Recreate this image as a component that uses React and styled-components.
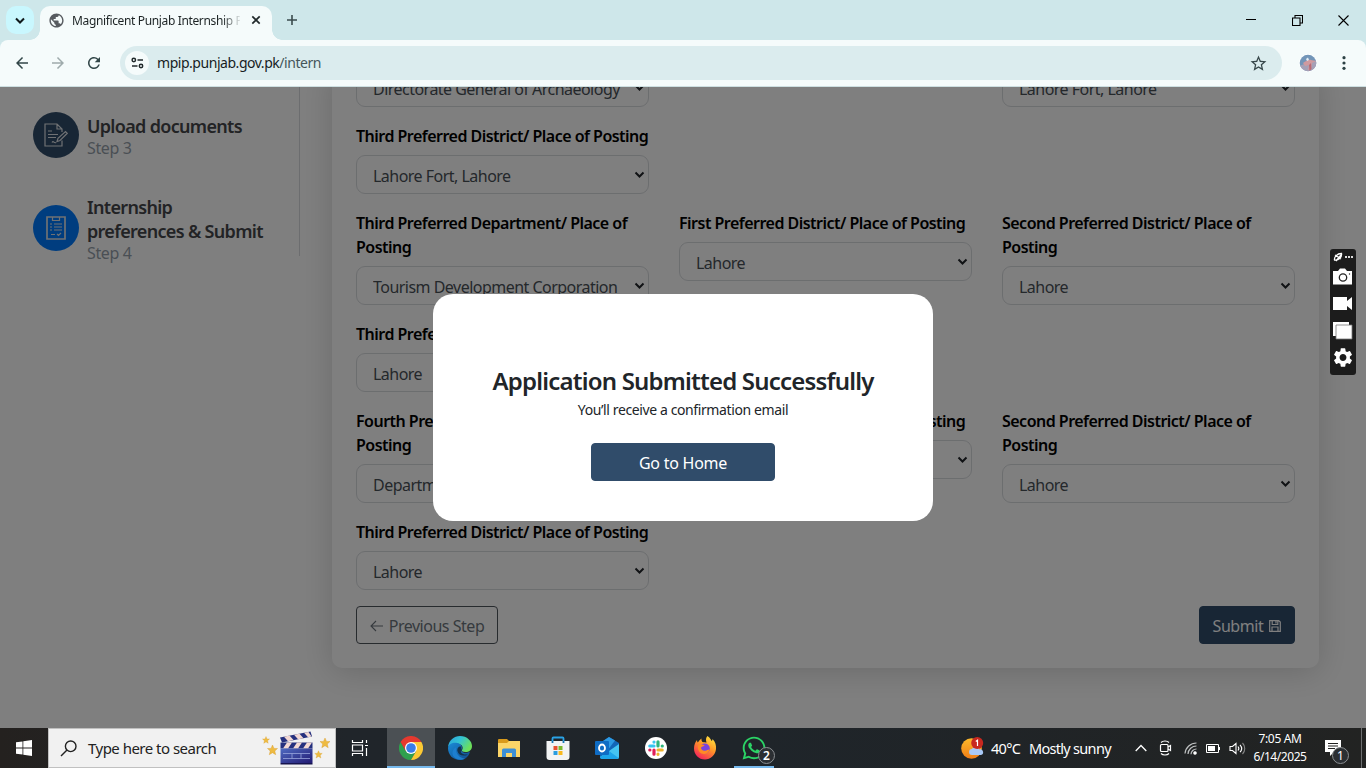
import React from "react";
import styled, { createGlobalStyle } from "styled-components";
import { MdPublic, MdStarBorder, MdArrowBack, MdArrowForward, MdRefresh, MdSettings } from "react-icons/md";
import { FaWhatsapp } from "react-icons/fa";

const Global = createGlobalStyle`
  * { box-sizing: border-box; }
  body { margin: 0; overflow: hidden; font-family: "Noto Sans", "Open Sans", sans-serif; }
  svg { display: block; flex: none; }
`;

const Screen = styled.div`
  width: 1366px;
  height: 768px;
  display: flex;
  flex-direction: column;
  overflow: hidden;
`;

const Text = styled.span`
  white-space: nowrap;
  letter-spacing: ${(p) => p.$ls || 0}px;
`;

/* ---------- browser frame ---------- */

const TabStrip = styled.div`
  height: 40px;
  flex: none;
  display: flex;
  align-items: flex-start;
  padding: 6px 0 0 6px;
  background: #cee7ea;
`;

const TabSearch = styled.div`
  width: 28px;
  height: 28px;
  border-radius: 10px;
  background: #c9f7fe;
  display: grid;
  place-items: center;
`;

const Tab = styled.div`
  position: relative;
  width: 232px;
  height: 34px;
  margin-left: 6px;
  padding: 0 11px 6px 8px;
  display: flex;
  align-items: center;
  background: #f5fbfb;
  border-radius: 10px 10px 0 0;
  &::before, &::after {
    content: "";
    position: absolute;
    bottom: 0;
    width: 10px;
    height: 10px;
  }
  &::before { left: -10px; background: radial-gradient(circle at 0 0, transparent 9.5px, #f5fbfb 10px); }
  &::after { right: -10px; background: radial-gradient(circle at 100% 0, transparent 9.5px, #f5fbfb 10px); }
`;

const TabTitle = styled.div`
  width: 168px;
  margin-left: 7px;
  padding-top: 1px;
  overflow: hidden;
  font-size: 12px;
  line-height: 18px;
  color: #1c2324;
  mask-image: linear-gradient(90deg, #000 150px, transparent 170px);
`;

const TabClose = styled.div`
  margin-left: auto;
`;

const NewTab = styled.div`
  margin: 8px 0 0 14px;
`;

const WindowButtons = styled.div`
  margin-left: auto;
  display: flex;
  height: 28px;
  > div { width: 46px; display: grid; place-items: center; }
`;

const ToolbarBack = styled.div`
  height: 47px;
  flex: none;
  background: #cee7ea;
`;

const Toolbar = styled.div`
  height: 47px;
  display: flex;
  align-items: center;
  background: #f5fbfb;
  border-bottom: 1px solid #cddfe1;
  border-radius: 8px 8px 0 0;
`;

const ToolIcon = styled.div`
  width: ${(p) => p.$w || 36}px;
  display: grid;
  place-items: center;
  color: ${(p) => p.$c || "#324648"};
`;

const Omnibox = styled.div`
  width: 1162px;
  height: 34px;
  margin-left: 4px;
  padding: 0 14px 0 5px;
  display: flex;
  align-items: center;
  border-radius: 17px;
  background: #dbecee;
`;

const SiteInfo = styled.div`
  width: 24px;
  height: 24px;
  border-radius: 50%;
  background: #f5fbfb;
  display: grid;
  place-items: center;
`;

const Url = styled.div`
  flex: 1;
  margin-left: 8px;
  font-size: 14px;
  line-height: 20px;
  color: #171d1e;
  i { font-style: normal; color: #44565a; }
`;

/* ---------- web page ---------- */

const Page = styled.main`
  position: relative;
  flex: 1;
  min-height: 0;
  overflow: hidden;
  display: flex;
  align-items: flex-start;
  background: #fff;
`;

const Steps = styled.aside`
  width: 300px;
  height: 169px;
  padding: 25px 0 0 33px;
  border-right: 1px solid #d9dbde;
`;

const Step = styled.div`
  display: flex;
  align-items: center;
  margin-bottom: ${(p) => p.$gap || 0}px;
`;

const StepBadge = styled.div`
  width: 46px;
  height: 46px;
  margin-right: 8px;
  border-radius: 50%;
  display: grid;
  place-items: center;
  background: ${(p) => p.$bg};
`;

const StepText = styled.div`
  padding-top: 2px;
`;

const StepTitle = styled.div`
  font-size: 18px;
  font-weight: 600;
  line-height: 24px;
  color: #45464a;
`;

const StepNote = styled.div`
  font-size: 16px;
  line-height: 20px;
  color: #949ea9;
`;

const Card = styled.section`
  width: 987px;
  margin: -19px 0 0 32px;
  padding: 0 24px 24px;
  border-radius: 10px;
  background: #fff;
  box-shadow: 0 4px 32px rgba(0, 0, 0, 0.17);
`;

const FieldGrid = styled.div`
  display: grid;
  grid-template-columns: repeat(3, 293px);
  column-gap: 30px;
  row-gap: 16px;
  align-items: start;
  margin-bottom: 16px;
`;

const Field = styled.div`
  grid-column: ${(p) => p.$col || "auto"};
`;

const Label = styled.div`
  padding-top: 1px;
  margin-bottom: 7px;
  font-size: 16px;
  font-weight: 600;
  line-height: 24px;
  color: #000;
`;

const Select = styled.div`
  height: 39px;
  padding: 0 3px 0 16px;
  display: flex;
  align-items: center;
  justify-content: space-between;
  border: 1px solid #d9dcdf;
  border-radius: 9px;
  font-size: 16px;
  line-height: 24px;
  color: #495057;
`;

const Value = styled.div`
  width: 249px;
  padding-top: 3px;
  overflow: hidden;
`;

const Actions = styled.div`
  display: flex;
  justify-content: space-between;
`;

const Button = styled.div`
  height: 38px;
  width: ${(p) => p.$w}px;
  padding-top: 1px;
  display: flex;
  align-items: center;
  justify-content: center;
  gap: 6px;
  border-radius: 4px;
  font-size: 16px;
  line-height: 24px;
  border: 1px solid ${(p) => (p.$outline ? "#4f565d" : "#304c6a")};
  background: ${(p) => (p.$outline ? "transparent" : "#304c6a")};
  color: ${(p) => (p.$outline ? "#6c757d" : "#fff")};
`;

const Backdrop = styled.div`
  position: absolute;
  inset: 0;
  display: grid;
  place-items: center;
  background: rgba(0, 0, 0, 0.5);
`;

const Modal = styled.div`
  width: 500px;
  height: 227px;
  padding-top: 72px;
  display: flex;
  flex-direction: column;
  align-items: center;
  border-radius: 20px;
  background: #fff;
  color: #212529;
`;

const ModalTitle = styled.div`
  font-size: 24px;
  font-weight: 600;
  line-height: 30px;
`;

const ModalNote = styled.div`
  margin: 3px 0 23px;
  font-size: 14px;
  line-height: 21px;
`;

const Recorder = styled.div`
  position: absolute;
  left: 1330px;
  top: 162px;
  width: 26px;
  height: 126px;
  border-radius: 3px;
  background: #1c1c1c;
`;

/* ---------- taskbar ---------- */

const Taskbar = styled.footer`
  height: 40px;
  flex: none;
  display: flex;
  align-items: stretch;
  background: linear-gradient(90deg, #24211f 0, #20252a 350px, #1f252a 760px, #202427 1000px, #222322 1366px);
  color: #fff;
`;

const Cell = styled.div`
  position: relative;
  width: ${(p) => p.$w || 48}px;
  margin-right: ${(p) => p.$mr || 0}px;
  display: grid;
  place-items: center;
  background: ${(p) => (p.$active ? "#4b5054" : "transparent")};
  box-shadow: ${(p) => (p.$active ? "inset 0 -2px #76b9ed" : "none")};
`;

const RunMark = styled.div`
  position: absolute;
  left: 4px;
  right: 4px;
  bottom: 0;
  height: 2px;
  background: #76b9ed;
`;

const Badge = styled.div`
  position: absolute;
  left: ${(p) => p.$x}px;
  top: ${(p) => p.$y}px;
  width: 17px;
  height: 17px;
  border-radius: 50%;
  border: 1px solid #8b8f92;
  background: #2b2f33;
  font-size: 12px;
  font-weight: ${(p) => p.$weight || 600};
  line-height: 15px;
  text-align: center;
`;

const SearchBox = styled.div`
  width: 288px;
  display: flex;
  align-items: center;
  padding: 0 5px 0 11px;
  border: 1px solid #c0c0c0;
  background: #f1f1f1;
  color: #222;
  font-size: 15px;
`;

const SearchHint = styled.div`
  flex: 1;
  margin-left: 11px;
`;

const Tray = styled.div`
  margin-left: auto;
  display: flex;
  align-items: stretch;
`;

const Weather = styled.div`
  width: 169px;
  display: flex;
  align-items: center;
  font-size: 14.5px;
`;

const WeatherIcon = styled.div`
  margin-right: 7px;
`;

const WeatherTemp = styled.div`
  width: 38px;
`;

const Clock = styled.div`
  width: 62px;
  padding-top: 2px;
  text-align: center;
  font-size: 12px;
  line-height: 18px;
`;

const ShowDesktop = styled.div`
  width: 5px;
  border-left: 1px solid #6d6f70;
`;

/* ---------- drawings ---------- */

const Stroke = ({ w, h = w, d, sw = 1.5, c = "currentColor", children }) => (
  <svg width={w} height={h} viewBox={`0 0 ${w} ${h}`} fill="none" stroke={c} strokeWidth={sw}>
    {d && <path d={d} />}
    {children}
  </svg>
);

const Caret = () => <Stroke w={11} h={8} sw={2} c="#202429" d="M1.5 1.5 5.5 5.5 9.5 1.5" />;

const Chrome = () => (
  <svg width="24" height="24" viewBox="0 0 24 24">
    <path d="M12 12 17.2 15 12 24A12 12 0 0 1 1.6 6L6.8 15z" fill="#2fa04e" />
    <path d="M12 6H22.4A12 12 0 0 0 1.6 6L6.8 15z" fill="#e5392f" />
    <path d="M12 6H22.4A12 12 0 0 1 12 24L17.2 15z" fill="#fcc934" />
    <circle cx="12" cy="12" r="6" fill="#fff" />
    <circle cx="12" cy="12" r="4.8" fill="#3a7de9" />
  </svg>
);

const Edge = () => (
  <svg width="24" height="24" viewBox="0 0 24 24">
    <defs>
      <linearGradient id="edgeTop" x1="0" y1="0" x2="1" y2=".5">
        <stop offset="0" stopColor="#2c9fdc" />
        <stop offset=".5" stopColor="#33c3d4" />
        <stop offset="1" stopColor="#6ce05a" />
      </linearGradient>
      <linearGradient id="edgeLow" x1="0" y1="0" x2="1" y2="1">
        <stop offset="0" stopColor="#1a8bd8" />
        <stop offset="1" stopColor="#114a8b" />
      </linearGradient>
    </defs>
    <path d="M0 11C1 4 6 0 12 0c7 0 12 5 12 10 0 4-3 6-6.500 6-3 0-4-1-3.500-2 1.500-2 .5-6-4-6C5 8 1 10 0 11z" fill="url(#edgeTop)" />
    <path d="M0 12C.5 8 4 6.500 8 6.700c4 .3 6.500 2.800 6 5.800-.4 1-1 1.200-.6 2.200 1 2.300 5.600 2.800 8.600.8C20.500 21 17 24 12 24 5 24 0 19 0 12z" fill="url(#edgeLow)" />
    <path d="M8.500 11c-2 5 2 11 8.500 11.500C14 24.300 9 24.500 5.500 20.500 3 17 5 12.500 8.500 11z" fill="#1d7fcf" />
    <path d="M13.300 10.500c-2.500-.5-4.500 1.700-3.800 4.700.8 3.800 5.500 5.800 10.500 3.200-2 .6-9-.2-6.700-4.700z" fill="#13324c" />
  </svg>
);

const Folder = () => (
  <svg width="22" height="18" viewBox="0 0 22 18">
    <path d="M0 1a1 1 0 0 1 1-1h8l2 2h10a1 1 0 0 1 1 1v14H0z" fill="#d99a1b" />
    <path d="M0 4h9l2-2h11v16H0z" fill="#fbd568" />
    <path d="M4 18v-7a1.500 1.500 0 0 1 1.500-1.500h11A1.500 1.500 0 0 1 18 11v7h-4v-4H8v4z" fill="#3c8fd6" />
  </svg>
);

const Store = () => (
  <svg width="24" height="24" viewBox="0 0 24 24">
    <path d="M6.500 7V2.500a1 1 0 0 1 1-1h9a1 1 0 0 1 1 1V7" fill="none" stroke="#2aa3e6" strokeWidth="1.800" />
    <path d="M.5 5h23v16a3 3 0 0 1-3 3h-17a3 3 0 0 1-3-3z" fill="#f2f3f4" />
    <path d="M6.500 7V5M17.500 7V5" stroke="#1878b8" strokeWidth="1.800" />
    <path d="M7.500 10h4v4h-4z" fill="#e8502f" />
    <path d="M12.500 10h4v4h-4z" fill="#7dba2c" />
    <path d="M7.500 15h4v4h-4z" fill="#2a9de0" />
    <path d="M12.500 15h4v4h-4z" fill="#f9b91e" />
  </svg>
);

const Outlook = () => (
  <svg width="24" height="22" viewBox="0 0 24 22">
    <path d="M5 6 14 0l10 6v14a2 2 0 0 1-2 2H7a2 2 0 0 1-2-2z" fill="#1266b8" />
    <path d="M5 6 14 0l6 3.500L12 14z" fill="#2c9ae4" />
    <path d="M24 7v13a2 2 0 0 1-2 2H7l-2-2 9-6z" fill="#45c5f2" />
    <path d="M14 14l9.500 7a2 2 0 0 1-1.500 1H7a2 2 0 0 1-2-2z" fill="#1ea6ea" />
    <rect y="4" width="14" height="14" rx="1" fill="#0f6cc4" />
    <ellipse cx="7" cy="11" rx="3" ry="3.500" fill="none" stroke="#fff" strokeWidth="1.800" />
  </svg>
);

const Slack = () => (
  <svg width="22" height="22" viewBox="0 0 22 22">
    <circle cx="11" cy="11" r="11" fill="#fff" />
    <g strokeWidth="3.200" strokeLinecap="round">
      <path d="M9 5v.1M4.800 9H9" stroke="#36c5f0" />
      <path d="M13 4.800V9M17.200 9h.1" stroke="#2eb67d" />
      <path d="M4.800 13h.1M9 13v4.200" stroke="#e01e5a" />
      <path d="M13 13h4.200M13 17.200v.1" stroke="#ecb22e" />
    </g>
  </svg>
);

const Firefox = () => (
  <svg width="24" height="24" viewBox="0 0 24 24">
    <defs>
      <linearGradient id="fox" x1=".8" y1="0" x2=".2" y2="1">
        <stop offset="0" stopColor="#ffe63f" />
        <stop offset=".45" stopColor="#ff9428" />
        <stop offset="1" stopColor="#f3195f" />
      </linearGradient>
    </defs>
    <path d="M14.500 0c3 2 3.500 4 4 5 1-.5 1-1.500 1-2 3 3 3.800 6 3.500 10-.6 6-5.500 10.500-11 10.500C5.500 23.500 1 18.500 1 12.500c0-3.500 1.200-6.500 3-8.500 0 1 .3 2 .7 2.600C5.500 5.500 7 3.500 8.500 2.500 8.300 4 8.600 5 9.500 6c2 .3 3 .4 4 .4C12.500 4 13 1.500 14.500 0z" fill="url(#fox)" />
    <circle cx="11.800" cy="12.500" r="5" fill="#7a42dd" />
    <path d="M5 9.500c2-1.500 5-1.200 6.800 0-1.200.8-3.300 1-3.800 2.200 0 1.500 1.500 3.300 4 3 2-.3 3-1.500 4.500-1.200-.8 3.500-4 5-6.700 4.300C6 17 4.500 13.500 5 9.500z" fill="#ff8b25" />
  </svg>
);

const Clapper = () => (
  <svg width="68" height="34" viewBox="0 0 68 34">
    <defs>
      <linearGradient id="clap" x1="0" y1="0" x2="1" y2="1">
        <stop offset="0" stopColor="#4f6bc2" />
        <stop offset="1" stopColor="#221a72" />
      </linearGradient>
      <path id="star" d="M0-5 1.500-1.600 5-1.500 2.300 1 3.200 4.700 0 2.700-3.200 4.700-2.300 1-5-1.500-1.500-1.600z" />
    </defs>
    <path d="M18 6.500 48.500 .5l1.500 5L20 11.500z" fill="#26317f" />
    <path d="M22 5.800l5.500-1.200 4 4.500-5.500 1.200zM32 3.800l5.500-1.100 4 4.500-5.500 1.100zM42 1.800l4.500-.9 3 4.500-3.500.8z" fill="#f3d9d3" />
    <path d="M18.500 11.500h32v6h-32z" fill="#26317f" />
    <path d="M25 11.500h5l-4 6h-5zM35 11.500h5l-4 6h-5zM45 11.500h5l-4 6h-5z" fill="#f3d9d3" />
    <path d="M18.500 17.500h32V32h-32z" fill="url(#clap)" />
    <path d="M21 22.500h27M21 27.500h27M30 22.500v5M39 22.500v5" stroke="#98a4dc" strokeWidth=".8" />
    <path d="M18.500 32h32v1.500h-32z" fill="#16144e" />
    <g fill="#eebb42" stroke="#d69b2a" strokeWidth=".4">
      <use href="#star" transform="translate(4 9) scale(.7)" />
      <use href="#star" transform="translate(10.500 19)" />
      <use href="#star" transform="translate(63 12)" />
      <use href="#star" transform="translate(56.500 23.500) scale(.75)" />
    </g>
  </svg>
);

const DocPen = () => (
  <Stroke w={24} h={24} c="#dfe3e8" sw={1.200}>
    <path d="M18 17.500V23H1V1h12l5 5v3M13 1v5h5M4 8h4M4 11.500h10M4 14.500h8" />
    <path d="M13 18.500l1-3.200 7.500-6.800 1.800 1.800-7.300 7.200zM8 19.500c1.500-2.500 2 1.300 4 0" />
  </Stroke>
);

const Clipboard = () => (
  <Stroke w={20} h={24} c="#dfe3e8" sw={1.200}>
    <path d="M1 1h18v22H1z" strokeWidth="1.700" />
    <path d="M6.500 1v3.500h7V1M8 8h8M8 11h8M8 14h8M4 8h2M4 11h2M4 14h2M5 18.500h4M11 18l1.500 1.500L15 17" />
  </Stroke>
);

const FloppyIcon = () => (
  <Stroke w={12} h={12} sw={1.200}>
    <path d="M.7.7h9L11.300 2v9.300H.7zM3.200 1v3.500h5.600V1M3 11V7h6v4M7 1v2.500" />
  </Stroke>
);

const RecorderIcons = () => (
  <svg width="26" height="126" viewBox="0 0 26 126">
    <path d="M4.500 11C4 8 7 4.500 11.500 4.500 12 8 9 11.500 4.500 11zM6 12l5-6M5 6l6 4" fill="none" stroke="#fff" strokeWidth="1.300" />
    <path d="M15 7h2v2h-2zM18 7h2v2h-2zM21 7h2v2h-2z" fill="#ddd" />
    <path d="M3 22h5l2-2.500h5l2 2.500h5v13.500H3z" fill="#fff" />
    <circle cx="13" cy="28.500" r="3.700" fill="none" stroke="#222" strokeWidth="1.300" />
    <circle cx="19.500" cy="25" r=".7" fill="#222" />
    <path d="M3 48h14v4l5-4v13l-5-4v4H3z" fill="#fff" />
    <path d="M3 73h16v14H3z" fill="#fff" />
    <path d="M6 76h16v14H6z" fill="#fff" stroke="#777" strokeWidth=".8" />
    <g transform="translate(1.500 97)">
      <MdSettings size={23} color="#fff" />
    </g>
  </svg>
);

const WindowsLogo = () => (
  <svg width="16" height="16" viewBox="0 0 16 16" fill="#fff">
    <path d="M0 2.300 6.500 1.400V7.600H0zM7.300 1.300 16 0v7.600H7.300zM0 8.400h6.500v6.200L0 13.700zM7.300 8.400H16V16l-8.700-1.300z" />
  </svg>
);

const WeatherGlyph = () => (
  <svg width="23" height="22" viewBox="0 0 23 22">
    <defs>
      <linearGradient id="sun" x1="0" y1="0" x2="0" y2="1">
        <stop offset="0" stopColor="#fdb92b" />
        <stop offset="1" stopColor="#ef7d16" />
      </linearGradient>
    </defs>
    <circle cx="10.500" cy="11.500" r="10.300" fill="url(#sun)" />
    <path d="M11 18a3 3 0 0 1 0-6 4 4 0 0 1 7.500.5A2.800 2.800 0 0 1 20 18z" fill="#a9c8f5" />
    <circle cx="16.200" cy="6" r="6" fill="#c8281f" />
    <path d="M14.800 4.500 16.500 3.200V9" fill="none" stroke="#fff" strokeWidth="1.200" />
  </svg>
);

const Avatar = () => (
  <svg width="18" height="18" viewBox="0 0 18 18">
    <defs>
      <clipPath id="face"><circle cx="9" cy="9" r="8.300" /></clipPath>
    </defs>
    <circle cx="9" cy="9" r="9" fill="#fff" />
    <g clipPath="url(#face)">
      <path d="M0 0h18v18H0z" fill="#7295b8" />
      <path d="M0 12 8 9l10-3v12H0z" fill="#a5a0b6" />
      <path d="M4 9c3-2 6-4 8-3l5 1-4 2-1 7H9l1-5-4 1z" fill="#cf9a9f" />
      <path d="M7 5l2-1.500L10 6 8 7z" fill="#e7eef4" />
      <path d="M10 11l2-2 .5 6-2 2z" fill="#b96a74" />
    </g>
  </svg>
);

/* ---------- data ---------- */

const THIRD = ["Third Preferred District/ Place of Posting"];
const FIRST = ["First Preferred District/ Place of Posting"];
const SECOND = ["Second Preferred District/ Place of", "Posting"];

const FIELDS = [
  { col: 1, value: "Directorate General of Archaeology" },
  { col: 3, value: "Lahore Fort, Lahore" },
  { col: 1, label: THIRD, value: "Lahore Fort, Lahore" },
  { col: 1, label: ["Third Preferred Department/ Place of", "Posting"], value: "Tourism Development Corporation" },
  { col: 2, label: FIRST, value: "Lahore" },
  { col: 3, label: SECOND, value: "Lahore" },
  { col: 1, label: THIRD, value: "Lahore" },
  { col: 1, label: ["Fourth Preferred Department/ Place of", "Posting"], value: "Department of Tourism" },
  { col: 2, label: FIRST, value: "Lahore" },
  { col: 3, label: SECOND, value: "Lahore" },
  { col: 1, label: THIRD, value: "Lahore" },
];

const APPS = [Edge, Folder, Store, Outlook, Slack, Firefox];

export default function App() {
  return (
    <Screen>
      <Global />
      <TabStrip>
        <TabSearch><Stroke w={10} h={7} sw={2} c="#10191b" d="M1 1.500 5 5.500 9 1.500" /></TabSearch>
        <Tab>
          <MdPublic size={17} color="#575b60" />
          <TabTitle><Text $ls={-0.36}>Magnificent Punjab Internship Program</Text></TabTitle>
          <TabClose><Stroke w={10} sw={1.700} c="#20292b" d="M1.300 1.300 8.700 8.700M8.700 1.300 1.300 8.700" /></TabClose>
        </Tab>
        <NewTab><Stroke w={12} sw={1.600} c="#3a4b4d" d="M6 1V11M1 6H11" /></NewTab>
        <WindowButtons>
          <div><Stroke w={10} sw={1} c="#000" d="M0 4.500H10" /></div>
          <div><Stroke w={11} sw={1.100} c="#000" d="M.5 3h7.500v7.500H.5zM3 3V.5h7.500V8H8" /></div>
          <div><Stroke w={11} sw={1.100} c="#000" d="M.5.5 10.500 10.500M10.500.5.5 10.500" /></div>
        </WindowButtons>
      </TabStrip>
      <ToolbarBack>
        <Toolbar>
          <ToolIcon $w={44}><MdArrowBack size={18} /></ToolIcon>
          <ToolIcon $w={28} $c="#9fabac"><MdArrowForward size={18} /></ToolIcon>
          <ToolIcon $w={44}><MdRefresh size={18} /></ToolIcon>
          <Omnibox>
            <SiteInfo>
              <Stroke w={13} h={12} sw={1.500} c="#20292b">
                <circle cx="2.800" cy="3" r="1.700" />
                <circle cx="10" cy="9" r="1.700" />
                <path d="M6.500 3H12M1 9H6.500" />
              </Stroke>
            </SiteInfo>
            <Url><Text $ls={-0.46}>mpip.punjab.gov.pk<i>/intern</i></Text></Url>
            <MdStarBorder size={19} color="#37474a" />
          </Omnibox>
          <ToolIcon $w={52}><Avatar /></ToolIcon>
          <ToolIcon $w={20}>
            <svg width="4" height="14" viewBox="0 0 4 14" fill="#2c4144">
              <circle cx="2" cy="1.700" r="1.600" />
              <circle cx="2" cy="7" r="1.600" />
              <circle cx="2" cy="12.300" r="1.600" />
            </svg>
          </ToolIcon>
        </Toolbar>
      </ToolbarBack>

      <Page>
        <Steps>
          <Step $gap={35}>
            <StepBadge $bg="#304c6a"><DocPen /></StepBadge>
            <StepText>
              <StepTitle><Text $ls={-0.68}>Upload documents</Text></StepTitle>
              <StepNote><Text $ls={-0.35}>Step 3</Text></StepNote>
            </StepText>
          </Step>
          <Step>
            <StepBadge $bg="#007bff"><Clipboard /></StepBadge>
            <StepText>
              <StepTitle>
                <Text $ls={-0.68}>Internship</Text><br />
                <Text $ls={-0.68}>preferences &amp; Submit</Text>
              </StepTitle>
              <StepNote><Text $ls={-0.35}>Step 4</Text></StepNote>
            </StepText>
          </Step>
        </Steps>
        <Card>
          <FieldGrid>
            {FIELDS.map((f, i) => (
              <Field key={i} $col={f.col}>
                {f.label && (
                  <Label>
                    {f.label.map((line) => (
                      <div key={line}><Text $ls={-0.52}>{line}</Text></div>
                    ))}
                  </Label>
                )}
                <Select>
                  <Value><Text $ls={-0.52}>{f.value}</Text></Value>
                  <Caret />
                </Select>
              </Field>
            ))}
          </FieldGrid>
          <Actions>
            <Button $w={142} $outline>
              <Stroke w={13} h={12} sw={1.100} d="M13 6H1M6 1 1 6 6 11" />
              <Text $ls={-0.48}>Previous Step</Text>
            </Button>
            <Button $w={96}>
              <Text $ls={-0.4}>Submit</Text>
              <FloppyIcon />
            </Button>
          </Actions>
        </Card>
        <Backdrop>
          <Modal>
            <ModalTitle><Text $ls={-0.8}>Application Submitted Successfully</Text></ModalTitle>
            <ModalNote><Text $ls={-0.39}>You’ll receive a confirmation email</Text></ModalNote>
            <Button $w={184}><Text $ls={-0.25}>Go to Home</Text></Button>
          </Modal>
        </Backdrop>
        <Recorder><RecorderIcons /></Recorder>
      </Page>

      <Taskbar>
        <Cell><WindowsLogo /></Cell>
        <SearchBox>
          <Stroke w={17} h={17} sw={1.400} c="#222">
            <circle cx="10.700" cy="6.300" r="5.300" />
            <path d="M7 10 1 16" />
          </Stroke>
          <SearchHint><Text $ls={-0.52}>Type here to search</Text></SearchHint>
          <Clapper />
        </SearchBox>
        <Cell $mr={3}>
          <Stroke w={18} h={16} sw={1.200} c="#fff" d="M1.500 0V2.500H11.500V0M1.500 5H11.500V11H1.500zM1.500 16V13.500H11.500V16M15.500 0V3M15.500 8V16M14 5.500H17" />
        </Cell>
        <Cell $active $mr={1}><Chrome /></Cell>
        {APPS.map((Icon, i) => (
          <Cell key={i} $mr={1}><Icon /></Cell>
        ))}
        <Cell>
          <FaWhatsapp size={26} color="#2bd366" />
          <RunMark />
          <Badge $x={28} $y={19}>2</Badge>
        </Cell>
        <Tray>
          <Weather>
            <WeatherIcon><WeatherGlyph /></WeatherIcon>
            <WeatherTemp><Text $ls={-0.7}>40°C</Text></WeatherTemp>
            <Text $ls={-0.7}>Mostly sunny</Text>
          </Weather>
          <Cell $w={22}><Stroke w={12} h={8} sw={1.300} c="#fff" d="M.7 7 6 1.500 11.300 7" /></Cell>
          <Cell $w={26}>
            <Stroke w={13} h={16} sw={1.200} c="#fff">
              <path d="M2 2.500C4 .5 8 .5 10 2.500M2 13.500c2 2 6 2 8 0" />
              <rect x="1.500" y="4.500" width="7.500" height="7" rx="1" />
              <path d="M9 7l2.500-1.500v5L9 9" />
            </Stroke>
          </Cell>
          <Cell $w={24}>
            <Stroke w={13} h={14} sw={1.200} c="#bfc1c2">
              <path d="M1 12.500A11.500 11.500 0 0 1 12.500 2M4 13a8.500 8.500 0 0 1 8.500-8M7 13.300a5.500 5.500 0 0 1 5.500-5.300" />
              <circle cx="11" cy="12" r="1.200" fill="#fff" stroke="#fff" />
            </Stroke>
          </Cell>
          <Cell $w={23}>
            <svg width="15" height="10" viewBox="0 0 15 10">
              <path d="M.5 1.500h12v8H.5zM13.500 4v3" fill="none" stroke="#fff" />
              <path d="M2 3h7v5H2z" fill="#fff" />
            </svg>
          </Cell>
          <Cell $w={24}>
            <Stroke w={17} h={13} sw={1.100} c="#fff">
              <path d="M1 4.500H3.500L7 1.500V11.500L3.500 8.500H1zM9 4.500c1 1.200 1 2.800 0 4M11 2.800c2 2.200 2 5.200 0 7.400" />
              <path d="M13.500 1c3 3.200 3 7.800 0 11" stroke="#888" />
            </Stroke>
          </Cell>
          <Clock>
            <div><Text $ls={-0.35}>7:05 AM</Text></div>
            <div><Text $ls={-0.45}>6/14/2025</Text></div>
          </Clock>
          <Cell $w={44} $mr={6}>
            <svg width="16" height="16" viewBox="0 0 16 16">
              <path d="M0 0h16v12H9l-4 4v-4H0z" fill="#fff" />
              <path d="M3 3.500h10M3 6h10M3 8.500h7" stroke="#222" />
            </svg>
            <Badge $x={21} $y={19} $weight={400}>1</Badge>
          </Cell>
          <ShowDesktop />
        </Tray>
      </Taskbar>
    </Screen>
  );
}
